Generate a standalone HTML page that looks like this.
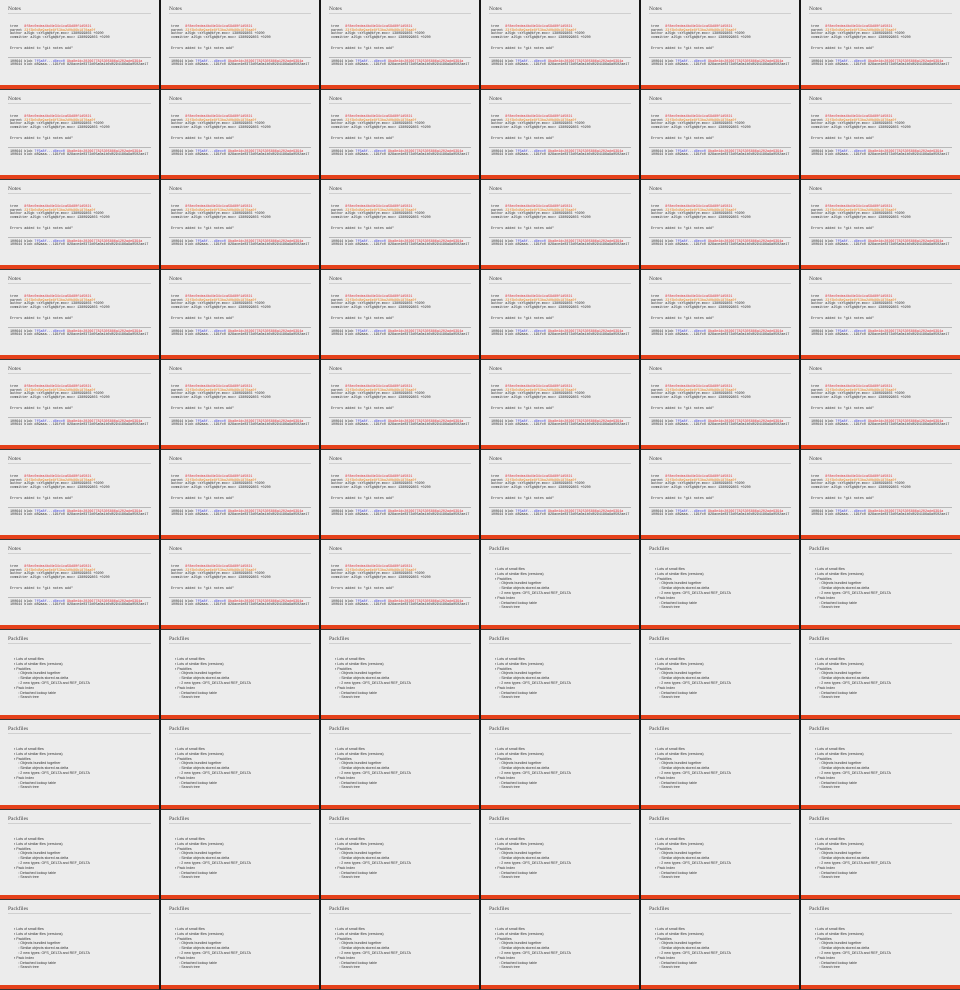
<!DOCTYPE html>
<html><head><meta charset="utf-8"><style>
*{margin:0;padding:0;box-sizing:border-box}
body{width:960px;height:990px;background:#1a1a1a;overflow:hidden;font-family:"Liberation Sans",sans-serif}
.g{display:grid;grid-template-columns:repeat(6,160px);grid-template-rows:repeat(11,90px)}
.c{position:relative;background:#ececec;border-left:1px solid #151515;border-right:1px solid #151515;border-bottom:1px solid #333;overflow:hidden}
.c:nth-child(6n+1){border-left:none}
.c:nth-child(6n){border-right:none}
.t{position:absolute;left:8px;top:6px;font-family:"Liberation Serif",serif;font-size:5.5px;color:#444}
.h{position:absolute;left:8px;right:8px;top:13px;height:1px;background:#cfcfcf}
.r{position:absolute;left:0;right:0;top:85px;height:4px;background:#e4411b}
.m{position:absolute;left:10px;top:26px;font-family:"Liberation Mono",monospace;font-size:3.4px;line-height:3.6px;color:#333;white-space:pre}
.m2{top:48px}
.m3{top:60.5px}
.red{color:#e0303a}.or{color:#e8821c}.bl{color:#4040e0}
.hr2{position:absolute;left:8px;right:8px;top:57px;height:1px;background:#b8b8b8}
.p{position:absolute;left:14px;top:27px;font-size:3.6px;line-height:4.8px;color:#333;white-space:pre}
</style></head><body><div class="g">
<!-- row 1 -->
<div class="c"><div class="t">Notes</div><div class="h"></div><div class="m">tree   <span class="red">8f8ec0edea4bd4e34c1ca59d80f1d5021</span>
parent <span class="or">23f3b0d8e9ae6e8f53ba2d0b86b1870aa0f</span>
author aJ5gb &lt;sY5gb@kfye.moc&gt; 1380999803 +0200
committer aJ5gb &lt;sY5gb@kfye.moc&gt; 1380999803 +0200</div><div class="m m2">Errors added to "git notes add"</div><div class="hr2"></div><div class="m m3">100644 blob <span class="bl">7f5a8f...d8ecc0</span> <span class="red">9ba8e4dc2026677825305886a1202ade9394a</span>
100644 blob d89aaa...191fc0 828ace4e0372d05a0a1b0d0294186a9a0502ae17</div><div class="r"></div></div>
<div class="c"><div class="t">Notes</div><div class="h"></div><div class="m">tree   <span class="red">8f8ec0edea4bd4e34c1ca59d80f1d5021</span>
parent <span class="or">23f3b0d8e9ae6e8f53ba2d0b86b1870aa0f</span>
author aJ5gb &lt;sY5gb@kfye.moc&gt; 1380999803 +0200
committer aJ5gb &lt;sY5gb@kfye.moc&gt; 1380999803 +0200</div><div class="m m2">Errors added to "git notes add"</div><div class="hr2"></div><div class="m m3">100644 blob <span class="bl">7f5a8f...d8ecc0</span> <span class="red">9ba8e4dc2026677825305886a1202ade9394a</span>
100644 blob d89aaa...191fc0 828ace4e0372d05a0a1b0d0294186a9a0502ae17</div><div class="r"></div></div>
<div class="c"><div class="t">Notes</div><div class="h"></div><div class="m">tree   <span class="red">8f8ec0edea4bd4e34c1ca59d80f1d5021</span>
parent <span class="or">23f3b0d8e9ae6e8f53ba2d0b86b1870aa0f</span>
author aJ5gb &lt;sY5gb@kfye.moc&gt; 1380999803 +0200
committer aJ5gb &lt;sY5gb@kfye.moc&gt; 1380999803 +0200</div><div class="m m2">Errors added to "git notes add"</div><div class="hr2"></div><div class="m m3">100644 blob <span class="bl">7f5a8f...d8ecc0</span> <span class="red">9ba8e4dc2026677825305886a1202ade9394a</span>
100644 blob d89aaa...191fc0 828ace4e0372d05a0a1b0d0294186a9a0502ae17</div><div class="r"></div></div>
<div class="c"><div class="t">Notes</div><div class="h"></div><div class="m">tree   <span class="red">8f8ec0edea4bd4e34c1ca59d80f1d5021</span>
parent <span class="or">23f3b0d8e9ae6e8f53ba2d0b86b1870aa0f</span>
author aJ5gb &lt;sY5gb@kfye.moc&gt; 1380999803 +0200
committer aJ5gb &lt;sY5gb@kfye.moc&gt; 1380999803 +0200</div><div class="m m2">Errors added to "git notes add"</div><div class="hr2"></div><div class="m m3">100644 blob <span class="bl">7f5a8f...d8ecc0</span> <span class="red">9ba8e4dc2026677825305886a1202ade9394a</span>
100644 blob d89aaa...191fc0 828ace4e0372d05a0a1b0d0294186a9a0502ae17</div><div class="r"></div></div>
<div class="c"><div class="t">Notes</div><div class="h"></div><div class="m">tree   <span class="red">8f8ec0edea4bd4e34c1ca59d80f1d5021</span>
parent <span class="or">23f3b0d8e9ae6e8f53ba2d0b86b1870aa0f</span>
author aJ5gb &lt;sY5gb@kfye.moc&gt; 1380999803 +0200
committer aJ5gb &lt;sY5gb@kfye.moc&gt; 1380999803 +0200</div><div class="m m2">Errors added to "git notes add"</div><div class="hr2"></div><div class="m m3">100644 blob <span class="bl">7f5a8f...d8ecc0</span> <span class="red">9ba8e4dc2026677825305886a1202ade9394a</span>
100644 blob d89aaa...191fc0 828ace4e0372d05a0a1b0d0294186a9a0502ae17</div><div class="r"></div></div>
<div class="c"><div class="t">Notes</div><div class="h"></div><div class="m">tree   <span class="red">8f8ec0edea4bd4e34c1ca59d80f1d5021</span>
parent <span class="or">23f3b0d8e9ae6e8f53ba2d0b86b1870aa0f</span>
author aJ5gb &lt;sY5gb@kfye.moc&gt; 1380999803 +0200
committer aJ5gb &lt;sY5gb@kfye.moc&gt; 1380999803 +0200</div><div class="m m2">Errors added to "git notes add"</div><div class="hr2"></div><div class="m m3">100644 blob <span class="bl">7f5a8f...d8ecc0</span> <span class="red">9ba8e4dc2026677825305886a1202ade9394a</span>
100644 blob d89aaa...191fc0 828ace4e0372d05a0a1b0d0294186a9a0502ae17</div><div class="r"></div></div>
<!-- row 2 -->
<div class="c"><div class="t">Notes</div><div class="h"></div><div class="m">tree   <span class="red">8f8ec0edea4bd4e34c1ca59d80f1d5021</span>
parent <span class="or">23f3b0d8e9ae6e8f53ba2d0b86b1870aa0f</span>
author aJ5gb &lt;sY5gb@kfye.moc&gt; 1380999803 +0200
committer aJ5gb &lt;sY5gb@kfye.moc&gt; 1380999803 +0200</div><div class="m m2">Errors added to "git notes add"</div><div class="hr2"></div><div class="m m3">100644 blob <span class="bl">7f5a8f...d8ecc0</span> <span class="red">9ba8e4dc2026677825305886a1202ade9394a</span>
100644 blob d89aaa...191fc0 828ace4e0372d05a0a1b0d0294186a9a0502ae17</div><div class="r"></div></div>
<div class="c"><div class="t">Notes</div><div class="h"></div><div class="m">tree   <span class="red">8f8ec0edea4bd4e34c1ca59d80f1d5021</span>
parent <span class="or">23f3b0d8e9ae6e8f53ba2d0b86b1870aa0f</span>
author aJ5gb &lt;sY5gb@kfye.moc&gt; 1380999803 +0200
committer aJ5gb &lt;sY5gb@kfye.moc&gt; 1380999803 +0200</div><div class="m m2">Errors added to "git notes add"</div><div class="hr2"></div><div class="m m3">100644 blob <span class="bl">7f5a8f...d8ecc0</span> <span class="red">9ba8e4dc2026677825305886a1202ade9394a</span>
100644 blob d89aaa...191fc0 828ace4e0372d05a0a1b0d0294186a9a0502ae17</div><div class="r"></div></div>
<div class="c"><div class="t">Notes</div><div class="h"></div><div class="m">tree   <span class="red">8f8ec0edea4bd4e34c1ca59d80f1d5021</span>
parent <span class="or">23f3b0d8e9ae6e8f53ba2d0b86b1870aa0f</span>
author aJ5gb &lt;sY5gb@kfye.moc&gt; 1380999803 +0200
committer aJ5gb &lt;sY5gb@kfye.moc&gt; 1380999803 +0200</div><div class="m m2">Errors added to "git notes add"</div><div class="hr2"></div><div class="m m3">100644 blob <span class="bl">7f5a8f...d8ecc0</span> <span class="red">9ba8e4dc2026677825305886a1202ade9394a</span>
100644 blob d89aaa...191fc0 828ace4e0372d05a0a1b0d0294186a9a0502ae17</div><div class="r"></div></div>
<div class="c"><div class="t">Notes</div><div class="h"></div><div class="m">tree   <span class="red">8f8ec0edea4bd4e34c1ca59d80f1d5021</span>
parent <span class="or">23f3b0d8e9ae6e8f53ba2d0b86b1870aa0f</span>
author aJ5gb &lt;sY5gb@kfye.moc&gt; 1380999803 +0200
committer aJ5gb &lt;sY5gb@kfye.moc&gt; 1380999803 +0200</div><div class="m m2">Errors added to "git notes add"</div><div class="hr2"></div><div class="m m3">100644 blob <span class="bl">7f5a8f...d8ecc0</span> <span class="red">9ba8e4dc2026677825305886a1202ade9394a</span>
100644 blob d89aaa...191fc0 828ace4e0372d05a0a1b0d0294186a9a0502ae17</div><div class="r"></div></div>
<div class="c"><div class="t">Notes</div><div class="h"></div><div class="m">tree   <span class="red">8f8ec0edea4bd4e34c1ca59d80f1d5021</span>
parent <span class="or">23f3b0d8e9ae6e8f53ba2d0b86b1870aa0f</span>
author aJ5gb &lt;sY5gb@kfye.moc&gt; 1380999803 +0200
committer aJ5gb &lt;sY5gb@kfye.moc&gt; 1380999803 +0200</div><div class="m m2">Errors added to "git notes add"</div><div class="hr2"></div><div class="m m3">100644 blob <span class="bl">7f5a8f...d8ecc0</span> <span class="red">9ba8e4dc2026677825305886a1202ade9394a</span>
100644 blob d89aaa...191fc0 828ace4e0372d05a0a1b0d0294186a9a0502ae17</div><div class="r"></div></div>
<div class="c"><div class="t">Notes</div><div class="h"></div><div class="m">tree   <span class="red">8f8ec0edea4bd4e34c1ca59d80f1d5021</span>
parent <span class="or">23f3b0d8e9ae6e8f53ba2d0b86b1870aa0f</span>
author aJ5gb &lt;sY5gb@kfye.moc&gt; 1380999803 +0200
committer aJ5gb &lt;sY5gb@kfye.moc&gt; 1380999803 +0200</div><div class="m m2">Errors added to "git notes add"</div><div class="hr2"></div><div class="m m3">100644 blob <span class="bl">7f5a8f...d8ecc0</span> <span class="red">9ba8e4dc2026677825305886a1202ade9394a</span>
100644 blob d89aaa...191fc0 828ace4e0372d05a0a1b0d0294186a9a0502ae17</div><div class="r"></div></div>
<!-- row 3 -->
<div class="c"><div class="t">Notes</div><div class="h"></div><div class="m">tree   <span class="red">8f8ec0edea4bd4e34c1ca59d80f1d5021</span>
parent <span class="or">23f3b0d8e9ae6e8f53ba2d0b86b1870aa0f</span>
author aJ5gb &lt;sY5gb@kfye.moc&gt; 1380999803 +0200
committer aJ5gb &lt;sY5gb@kfye.moc&gt; 1380999803 +0200</div><div class="m m2">Errors added to "git notes add"</div><div class="hr2"></div><div class="m m3">100644 blob <span class="bl">7f5a8f...d8ecc0</span> <span class="red">9ba8e4dc2026677825305886a1202ade9394a</span>
100644 blob d89aaa...191fc0 828ace4e0372d05a0a1b0d0294186a9a0502ae17</div><div class="r"></div></div>
<div class="c"><div class="t">Notes</div><div class="h"></div><div class="m">tree   <span class="red">8f8ec0edea4bd4e34c1ca59d80f1d5021</span>
parent <span class="or">23f3b0d8e9ae6e8f53ba2d0b86b1870aa0f</span>
author aJ5gb &lt;sY5gb@kfye.moc&gt; 1380999803 +0200
committer aJ5gb &lt;sY5gb@kfye.moc&gt; 1380999803 +0200</div><div class="m m2">Errors added to "git notes add"</div><div class="hr2"></div><div class="m m3">100644 blob <span class="bl">7f5a8f...d8ecc0</span> <span class="red">9ba8e4dc2026677825305886a1202ade9394a</span>
100644 blob d89aaa...191fc0 828ace4e0372d05a0a1b0d0294186a9a0502ae17</div><div class="r"></div></div>
<div class="c"><div class="t">Notes</div><div class="h"></div><div class="m">tree   <span class="red">8f8ec0edea4bd4e34c1ca59d80f1d5021</span>
parent <span class="or">23f3b0d8e9ae6e8f53ba2d0b86b1870aa0f</span>
author aJ5gb &lt;sY5gb@kfye.moc&gt; 1380999803 +0200
committer aJ5gb &lt;sY5gb@kfye.moc&gt; 1380999803 +0200</div><div class="m m2">Errors added to "git notes add"</div><div class="hr2"></div><div class="m m3">100644 blob <span class="bl">7f5a8f...d8ecc0</span> <span class="red">9ba8e4dc2026677825305886a1202ade9394a</span>
100644 blob d89aaa...191fc0 828ace4e0372d05a0a1b0d0294186a9a0502ae17</div><div class="r"></div></div>
<div class="c"><div class="t">Notes</div><div class="h"></div><div class="m">tree   <span class="red">8f8ec0edea4bd4e34c1ca59d80f1d5021</span>
parent <span class="or">23f3b0d8e9ae6e8f53ba2d0b86b1870aa0f</span>
author aJ5gb &lt;sY5gb@kfye.moc&gt; 1380999803 +0200
committer aJ5gb &lt;sY5gb@kfye.moc&gt; 1380999803 +0200</div><div class="m m2">Errors added to "git notes add"</div><div class="hr2"></div><div class="m m3">100644 blob <span class="bl">7f5a8f...d8ecc0</span> <span class="red">9ba8e4dc2026677825305886a1202ade9394a</span>
100644 blob d89aaa...191fc0 828ace4e0372d05a0a1b0d0294186a9a0502ae17</div><div class="r"></div></div>
<div class="c"><div class="t">Notes</div><div class="h"></div><div class="m">tree   <span class="red">8f8ec0edea4bd4e34c1ca59d80f1d5021</span>
parent <span class="or">23f3b0d8e9ae6e8f53ba2d0b86b1870aa0f</span>
author aJ5gb &lt;sY5gb@kfye.moc&gt; 1380999803 +0200
committer aJ5gb &lt;sY5gb@kfye.moc&gt; 1380999803 +0200</div><div class="m m2">Errors added to "git notes add"</div><div class="hr2"></div><div class="m m3">100644 blob <span class="bl">7f5a8f...d8ecc0</span> <span class="red">9ba8e4dc2026677825305886a1202ade9394a</span>
100644 blob d89aaa...191fc0 828ace4e0372d05a0a1b0d0294186a9a0502ae17</div><div class="r"></div></div>
<div class="c"><div class="t">Notes</div><div class="h"></div><div class="m">tree   <span class="red">8f8ec0edea4bd4e34c1ca59d80f1d5021</span>
parent <span class="or">23f3b0d8e9ae6e8f53ba2d0b86b1870aa0f</span>
author aJ5gb &lt;sY5gb@kfye.moc&gt; 1380999803 +0200
committer aJ5gb &lt;sY5gb@kfye.moc&gt; 1380999803 +0200</div><div class="m m2">Errors added to "git notes add"</div><div class="hr2"></div><div class="m m3">100644 blob <span class="bl">7f5a8f...d8ecc0</span> <span class="red">9ba8e4dc2026677825305886a1202ade9394a</span>
100644 blob d89aaa...191fc0 828ace4e0372d05a0a1b0d0294186a9a0502ae17</div><div class="r"></div></div>
<!-- row 4 -->
<div class="c"><div class="t">Notes</div><div class="h"></div><div class="m">tree   <span class="red">8f8ec0edea4bd4e34c1ca59d80f1d5021</span>
parent <span class="or">23f3b0d8e9ae6e8f53ba2d0b86b1870aa0f</span>
author aJ5gb &lt;sY5gb@kfye.moc&gt; 1380999803 +0200
committer aJ5gb &lt;sY5gb@kfye.moc&gt; 1380999803 +0200</div><div class="m m2">Errors added to "git notes add"</div><div class="hr2"></div><div class="m m3">100644 blob <span class="bl">7f5a8f...d8ecc0</span> <span class="red">9ba8e4dc2026677825305886a1202ade9394a</span>
100644 blob d89aaa...191fc0 828ace4e0372d05a0a1b0d0294186a9a0502ae17</div><div class="r"></div></div>
<div class="c"><div class="t">Notes</div><div class="h"></div><div class="m">tree   <span class="red">8f8ec0edea4bd4e34c1ca59d80f1d5021</span>
parent <span class="or">23f3b0d8e9ae6e8f53ba2d0b86b1870aa0f</span>
author aJ5gb &lt;sY5gb@kfye.moc&gt; 1380999803 +0200
committer aJ5gb &lt;sY5gb@kfye.moc&gt; 1380999803 +0200</div><div class="m m2">Errors added to "git notes add"</div><div class="hr2"></div><div class="m m3">100644 blob <span class="bl">7f5a8f...d8ecc0</span> <span class="red">9ba8e4dc2026677825305886a1202ade9394a</span>
100644 blob d89aaa...191fc0 828ace4e0372d05a0a1b0d0294186a9a0502ae17</div><div class="r"></div></div>
<div class="c"><div class="t">Notes</div><div class="h"></div><div class="m">tree   <span class="red">8f8ec0edea4bd4e34c1ca59d80f1d5021</span>
parent <span class="or">23f3b0d8e9ae6e8f53ba2d0b86b1870aa0f</span>
author aJ5gb &lt;sY5gb@kfye.moc&gt; 1380999803 +0200
committer aJ5gb &lt;sY5gb@kfye.moc&gt; 1380999803 +0200</div><div class="m m2">Errors added to "git notes add"</div><div class="hr2"></div><div class="m m3">100644 blob <span class="bl">7f5a8f...d8ecc0</span> <span class="red">9ba8e4dc2026677825305886a1202ade9394a</span>
100644 blob d89aaa...191fc0 828ace4e0372d05a0a1b0d0294186a9a0502ae17</div><div class="r"></div></div>
<div class="c"><div class="t">Notes</div><div class="h"></div><div class="m">tree   <span class="red">8f8ec0edea4bd4e34c1ca59d80f1d5021</span>
parent <span class="or">23f3b0d8e9ae6e8f53ba2d0b86b1870aa0f</span>
author aJ5gb &lt;sY5gb@kfye.moc&gt; 1380999803 +0200
committer aJ5gb &lt;sY5gb@kfye.moc&gt; 1380999803 +0200</div><div class="m m2">Errors added to "git notes add"</div><div class="hr2"></div><div class="m m3">100644 blob <span class="bl">7f5a8f...d8ecc0</span> <span class="red">9ba8e4dc2026677825305886a1202ade9394a</span>
100644 blob d89aaa...191fc0 828ace4e0372d05a0a1b0d0294186a9a0502ae17</div><div class="r"></div></div>
<div class="c"><div class="t">Notes</div><div class="h"></div><div class="m">tree   <span class="red">8f8ec0edea4bd4e34c1ca59d80f1d5021</span>
parent <span class="or">23f3b0d8e9ae6e8f53ba2d0b86b1870aa0f</span>
author aJ5gb &lt;sY5gb@kfye.moc&gt; 1380999803 +0200
committer aJ5gb &lt;sY5gb@kfye.moc&gt; 1380999803 +0200</div><div class="m m2">Errors added to "git notes add"</div><div class="hr2"></div><div class="m m3">100644 blob <span class="bl">7f5a8f...d8ecc0</span> <span class="red">9ba8e4dc2026677825305886a1202ade9394a</span>
100644 blob d89aaa...191fc0 828ace4e0372d05a0a1b0d0294186a9a0502ae17</div><div class="r"></div></div>
<div class="c"><div class="t">Notes</div><div class="h"></div><div class="m">tree   <span class="red">8f8ec0edea4bd4e34c1ca59d80f1d5021</span>
parent <span class="or">23f3b0d8e9ae6e8f53ba2d0b86b1870aa0f</span>
author aJ5gb &lt;sY5gb@kfye.moc&gt; 1380999803 +0200
committer aJ5gb &lt;sY5gb@kfye.moc&gt; 1380999803 +0200</div><div class="m m2">Errors added to "git notes add"</div><div class="hr2"></div><div class="m m3">100644 blob <span class="bl">7f5a8f...d8ecc0</span> <span class="red">9ba8e4dc2026677825305886a1202ade9394a</span>
100644 blob d89aaa...191fc0 828ace4e0372d05a0a1b0d0294186a9a0502ae17</div><div class="r"></div></div>
<!-- row 5 -->
<div class="c"><div class="t">Notes</div><div class="h"></div><div class="m">tree   <span class="red">8f8ec0edea4bd4e34c1ca59d80f1d5021</span>
parent <span class="or">23f3b0d8e9ae6e8f53ba2d0b86b1870aa0f</span>
author aJ5gb &lt;sY5gb@kfye.moc&gt; 1380999803 +0200
committer aJ5gb &lt;sY5gb@kfye.moc&gt; 1380999803 +0200</div><div class="m m2">Errors added to "git notes add"</div><div class="hr2"></div><div class="m m3">100644 blob <span class="bl">7f5a8f...d8ecc0</span> <span class="red">9ba8e4dc2026677825305886a1202ade9394a</span>
100644 blob d89aaa...191fc0 828ace4e0372d05a0a1b0d0294186a9a0502ae17</div><div class="r"></div></div>
<div class="c"><div class="t">Notes</div><div class="h"></div><div class="m">tree   <span class="red">8f8ec0edea4bd4e34c1ca59d80f1d5021</span>
parent <span class="or">23f3b0d8e9ae6e8f53ba2d0b86b1870aa0f</span>
author aJ5gb &lt;sY5gb@kfye.moc&gt; 1380999803 +0200
committer aJ5gb &lt;sY5gb@kfye.moc&gt; 1380999803 +0200</div><div class="m m2">Errors added to "git notes add"</div><div class="hr2"></div><div class="m m3">100644 blob <span class="bl">7f5a8f...d8ecc0</span> <span class="red">9ba8e4dc2026677825305886a1202ade9394a</span>
100644 blob d89aaa...191fc0 828ace4e0372d05a0a1b0d0294186a9a0502ae17</div><div class="r"></div></div>
<div class="c"><div class="t">Notes</div><div class="h"></div><div class="m">tree   <span class="red">8f8ec0edea4bd4e34c1ca59d80f1d5021</span>
parent <span class="or">23f3b0d8e9ae6e8f53ba2d0b86b1870aa0f</span>
author aJ5gb &lt;sY5gb@kfye.moc&gt; 1380999803 +0200
committer aJ5gb &lt;sY5gb@kfye.moc&gt; 1380999803 +0200</div><div class="m m2">Errors added to "git notes add"</div><div class="hr2"></div><div class="m m3">100644 blob <span class="bl">7f5a8f...d8ecc0</span> <span class="red">9ba8e4dc2026677825305886a1202ade9394a</span>
100644 blob d89aaa...191fc0 828ace4e0372d05a0a1b0d0294186a9a0502ae17</div><div class="r"></div></div>
<div class="c"><div class="t">Notes</div><div class="h"></div><div class="m">tree   <span class="red">8f8ec0edea4bd4e34c1ca59d80f1d5021</span>
parent <span class="or">23f3b0d8e9ae6e8f53ba2d0b86b1870aa0f</span>
author aJ5gb &lt;sY5gb@kfye.moc&gt; 1380999803 +0200
committer aJ5gb &lt;sY5gb@kfye.moc&gt; 1380999803 +0200</div><div class="m m2">Errors added to "git notes add"</div><div class="hr2"></div><div class="m m3">100644 blob <span class="bl">7f5a8f...d8ecc0</span> <span class="red">9ba8e4dc2026677825305886a1202ade9394a</span>
100644 blob d89aaa...191fc0 828ace4e0372d05a0a1b0d0294186a9a0502ae17</div><div class="r"></div></div>
<div class="c"><div class="t">Notes</div><div class="h"></div><div class="m">tree   <span class="red">8f8ec0edea4bd4e34c1ca59d80f1d5021</span>
parent <span class="or">23f3b0d8e9ae6e8f53ba2d0b86b1870aa0f</span>
author aJ5gb &lt;sY5gb@kfye.moc&gt; 1380999803 +0200
committer aJ5gb &lt;sY5gb@kfye.moc&gt; 1380999803 +0200</div><div class="m m2">Errors added to "git notes add"</div><div class="hr2"></div><div class="m m3">100644 blob <span class="bl">7f5a8f...d8ecc0</span> <span class="red">9ba8e4dc2026677825305886a1202ade9394a</span>
100644 blob d89aaa...191fc0 828ace4e0372d05a0a1b0d0294186a9a0502ae17</div><div class="r"></div></div>
<div class="c"><div class="t">Notes</div><div class="h"></div><div class="m">tree   <span class="red">8f8ec0edea4bd4e34c1ca59d80f1d5021</span>
parent <span class="or">23f3b0d8e9ae6e8f53ba2d0b86b1870aa0f</span>
author aJ5gb &lt;sY5gb@kfye.moc&gt; 1380999803 +0200
committer aJ5gb &lt;sY5gb@kfye.moc&gt; 1380999803 +0200</div><div class="m m2">Errors added to "git notes add"</div><div class="hr2"></div><div class="m m3">100644 blob <span class="bl">7f5a8f...d8ecc0</span> <span class="red">9ba8e4dc2026677825305886a1202ade9394a</span>
100644 blob d89aaa...191fc0 828ace4e0372d05a0a1b0d0294186a9a0502ae17</div><div class="r"></div></div>
<!-- row 6 -->
<div class="c"><div class="t">Notes</div><div class="h"></div><div class="m">tree   <span class="red">8f8ec0edea4bd4e34c1ca59d80f1d5021</span>
parent <span class="or">23f3b0d8e9ae6e8f53ba2d0b86b1870aa0f</span>
author aJ5gb &lt;sY5gb@kfye.moc&gt; 1380999803 +0200
committer aJ5gb &lt;sY5gb@kfye.moc&gt; 1380999803 +0200</div><div class="m m2">Errors added to "git notes add"</div><div class="hr2"></div><div class="m m3">100644 blob <span class="bl">7f5a8f...d8ecc0</span> <span class="red">9ba8e4dc2026677825305886a1202ade9394a</span>
100644 blob d89aaa...191fc0 828ace4e0372d05a0a1b0d0294186a9a0502ae17</div><div class="r"></div></div>
<div class="c"><div class="t">Notes</div><div class="h"></div><div class="m">tree   <span class="red">8f8ec0edea4bd4e34c1ca59d80f1d5021</span>
parent <span class="or">23f3b0d8e9ae6e8f53ba2d0b86b1870aa0f</span>
author aJ5gb &lt;sY5gb@kfye.moc&gt; 1380999803 +0200
committer aJ5gb &lt;sY5gb@kfye.moc&gt; 1380999803 +0200</div><div class="m m2">Errors added to "git notes add"</div><div class="hr2"></div><div class="m m3">100644 blob <span class="bl">7f5a8f...d8ecc0</span> <span class="red">9ba8e4dc2026677825305886a1202ade9394a</span>
100644 blob d89aaa...191fc0 828ace4e0372d05a0a1b0d0294186a9a0502ae17</div><div class="r"></div></div>
<div class="c"><div class="t">Notes</div><div class="h"></div><div class="m">tree   <span class="red">8f8ec0edea4bd4e34c1ca59d80f1d5021</span>
parent <span class="or">23f3b0d8e9ae6e8f53ba2d0b86b1870aa0f</span>
author aJ5gb &lt;sY5gb@kfye.moc&gt; 1380999803 +0200
committer aJ5gb &lt;sY5gb@kfye.moc&gt; 1380999803 +0200</div><div class="m m2">Errors added to "git notes add"</div><div class="hr2"></div><div class="m m3">100644 blob <span class="bl">7f5a8f...d8ecc0</span> <span class="red">9ba8e4dc2026677825305886a1202ade9394a</span>
100644 blob d89aaa...191fc0 828ace4e0372d05a0a1b0d0294186a9a0502ae17</div><div class="r"></div></div>
<div class="c"><div class="t">Notes</div><div class="h"></div><div class="m">tree   <span class="red">8f8ec0edea4bd4e34c1ca59d80f1d5021</span>
parent <span class="or">23f3b0d8e9ae6e8f53ba2d0b86b1870aa0f</span>
author aJ5gb &lt;sY5gb@kfye.moc&gt; 1380999803 +0200
committer aJ5gb &lt;sY5gb@kfye.moc&gt; 1380999803 +0200</div><div class="m m2">Errors added to "git notes add"</div><div class="hr2"></div><div class="m m3">100644 blob <span class="bl">7f5a8f...d8ecc0</span> <span class="red">9ba8e4dc2026677825305886a1202ade9394a</span>
100644 blob d89aaa...191fc0 828ace4e0372d05a0a1b0d0294186a9a0502ae17</div><div class="r"></div></div>
<div class="c"><div class="t">Notes</div><div class="h"></div><div class="m">tree   <span class="red">8f8ec0edea4bd4e34c1ca59d80f1d5021</span>
parent <span class="or">23f3b0d8e9ae6e8f53ba2d0b86b1870aa0f</span>
author aJ5gb &lt;sY5gb@kfye.moc&gt; 1380999803 +0200
committer aJ5gb &lt;sY5gb@kfye.moc&gt; 1380999803 +0200</div><div class="m m2">Errors added to "git notes add"</div><div class="hr2"></div><div class="m m3">100644 blob <span class="bl">7f5a8f...d8ecc0</span> <span class="red">9ba8e4dc2026677825305886a1202ade9394a</span>
100644 blob d89aaa...191fc0 828ace4e0372d05a0a1b0d0294186a9a0502ae17</div><div class="r"></div></div>
<div class="c"><div class="t">Notes</div><div class="h"></div><div class="m">tree   <span class="red">8f8ec0edea4bd4e34c1ca59d80f1d5021</span>
parent <span class="or">23f3b0d8e9ae6e8f53ba2d0b86b1870aa0f</span>
author aJ5gb &lt;sY5gb@kfye.moc&gt; 1380999803 +0200
committer aJ5gb &lt;sY5gb@kfye.moc&gt; 1380999803 +0200</div><div class="m m2">Errors added to "git notes add"</div><div class="hr2"></div><div class="m m3">100644 blob <span class="bl">7f5a8f...d8ecc0</span> <span class="red">9ba8e4dc2026677825305886a1202ade9394a</span>
100644 blob d89aaa...191fc0 828ace4e0372d05a0a1b0d0294186a9a0502ae17</div><div class="r"></div></div>
<!-- row 7: 3 notes + 3 packfiles -->
<div class="c"><div class="t">Notes</div><div class="h"></div><div class="m">tree   <span class="red">8f8ec0edea4bd4e34c1ca59d80f1d5021</span>
parent <span class="or">23f3b0d8e9ae6e8f53ba2d0b86b1870aa0f</span>
author aJ5gb &lt;sY5gb@kfye.moc&gt; 1380999803 +0200
committer aJ5gb &lt;sY5gb@kfye.moc&gt; 1380999803 +0200</div><div class="m m2">Errors added to "git notes add"</div><div class="hr2"></div><div class="m m3">100644 blob <span class="bl">7f5a8f...d8ecc0</span> <span class="red">9ba8e4dc2026677825305886a1202ade9394a</span>
100644 blob d89aaa...191fc0 828ace4e0372d05a0a1b0d0294186a9a0502ae17</div><div class="r"></div></div>
<div class="c"><div class="t">Notes</div><div class="h"></div><div class="m">tree   <span class="red">8f8ec0edea4bd4e34c1ca59d80f1d5021</span>
parent <span class="or">23f3b0d8e9ae6e8f53ba2d0b86b1870aa0f</span>
author aJ5gb &lt;sY5gb@kfye.moc&gt; 1380999803 +0200
committer aJ5gb &lt;sY5gb@kfye.moc&gt; 1380999803 +0200</div><div class="m m2">Errors added to "git notes add"</div><div class="hr2"></div><div class="m m3">100644 blob <span class="bl">7f5a8f...d8ecc0</span> <span class="red">9ba8e4dc2026677825305886a1202ade9394a</span>
100644 blob d89aaa...191fc0 828ace4e0372d05a0a1b0d0294186a9a0502ae17</div><div class="r"></div></div>
<div class="c"><div class="t">Notes</div><div class="h"></div><div class="m">tree   <span class="red">8f8ec0edea4bd4e34c1ca59d80f1d5021</span>
parent <span class="or">23f3b0d8e9ae6e8f53ba2d0b86b1870aa0f</span>
author aJ5gb &lt;sY5gb@kfye.moc&gt; 1380999803 +0200
committer aJ5gb &lt;sY5gb@kfye.moc&gt; 1380999803 +0200</div><div class="m m2">Errors added to "git notes add"</div><div class="hr2"></div><div class="m m3">100644 blob <span class="bl">7f5a8f...d8ecc0</span> <span class="red">9ba8e4dc2026677825305886a1202ade9394a</span>
100644 blob d89aaa...191fc0 828ace4e0372d05a0a1b0d0294186a9a0502ae17</div><div class="r"></div></div>
<div class="c"><div class="t">Packfiles</div><div class="h"></div><div class="p">▪ Lots of small files
▪ Lots of similar files (versions)
▪ Packfiles
    ▫ Objects bundled together
    ▫ Similar objects stored as delta
    ▫ 2 new types: OFS_DELTA and REF_DELTA
▪ Pack Index
    ▫ Detached lookup table
    ▫ Search tree</div><div class="r"></div></div>
<div class="c"><div class="t">Packfiles</div><div class="h"></div><div class="p">▪ Lots of small files
▪ Lots of similar files (versions)
▪ Packfiles
    ▫ Objects bundled together
    ▫ Similar objects stored as delta
    ▫ 2 new types: OFS_DELTA and REF_DELTA
▪ Pack Index
    ▫ Detached lookup table
    ▫ Search tree</div><div class="r"></div></div>
<div class="c"><div class="t">Packfiles</div><div class="h"></div><div class="p">▪ Lots of small files
▪ Lots of similar files (versions)
▪ Packfiles
    ▫ Objects bundled together
    ▫ Similar objects stored as delta
    ▫ 2 new types: OFS_DELTA and REF_DELTA
▪ Pack Index
    ▫ Detached lookup table
    ▫ Search tree</div><div class="r"></div></div>
<!-- row 8 -->
<div class="c"><div class="t">Packfiles</div><div class="h"></div><div class="p">▪ Lots of small files
▪ Lots of similar files (versions)
▪ Packfiles
    ▫ Objects bundled together
    ▫ Similar objects stored as delta
    ▫ 2 new types: OFS_DELTA and REF_DELTA
▪ Pack Index
    ▫ Detached lookup table
    ▫ Search tree</div><div class="r"></div></div>
<div class="c"><div class="t">Packfiles</div><div class="h"></div><div class="p">▪ Lots of small files
▪ Lots of similar files (versions)
▪ Packfiles
    ▫ Objects bundled together
    ▫ Similar objects stored as delta
    ▫ 2 new types: OFS_DELTA and REF_DELTA
▪ Pack Index
    ▫ Detached lookup table
    ▫ Search tree</div><div class="r"></div></div>
<div class="c"><div class="t">Packfiles</div><div class="h"></div><div class="p">▪ Lots of small files
▪ Lots of similar files (versions)
▪ Packfiles
    ▫ Objects bundled together
    ▫ Similar objects stored as delta
    ▫ 2 new types: OFS_DELTA and REF_DELTA
▪ Pack Index
    ▫ Detached lookup table
    ▫ Search tree</div><div class="r"></div></div>
<div class="c"><div class="t">Packfiles</div><div class="h"></div><div class="p">▪ Lots of small files
▪ Lots of similar files (versions)
▪ Packfiles
    ▫ Objects bundled together
    ▫ Similar objects stored as delta
    ▫ 2 new types: OFS_DELTA and REF_DELTA
▪ Pack Index
    ▫ Detached lookup table
    ▫ Search tree</div><div class="r"></div></div>
<div class="c"><div class="t">Packfiles</div><div class="h"></div><div class="p">▪ Lots of small files
▪ Lots of similar files (versions)
▪ Packfiles
    ▫ Objects bundled together
    ▫ Similar objects stored as delta
    ▫ 2 new types: OFS_DELTA and REF_DELTA
▪ Pack Index
    ▫ Detached lookup table
    ▫ Search tree</div><div class="r"></div></div>
<div class="c"><div class="t">Packfiles</div><div class="h"></div><div class="p">▪ Lots of small files
▪ Lots of similar files (versions)
▪ Packfiles
    ▫ Objects bundled together
    ▫ Similar objects stored as delta
    ▫ 2 new types: OFS_DELTA and REF_DELTA
▪ Pack Index
    ▫ Detached lookup table
    ▫ Search tree</div><div class="r"></div></div>
<!-- row 9 -->
<div class="c"><div class="t">Packfiles</div><div class="h"></div><div class="p">▪ Lots of small files
▪ Lots of similar files (versions)
▪ Packfiles
    ▫ Objects bundled together
    ▫ Similar objects stored as delta
    ▫ 2 new types: OFS_DELTA and REF_DELTA
▪ Pack Index
    ▫ Detached lookup table
    ▫ Search tree</div><div class="r"></div></div>
<div class="c"><div class="t">Packfiles</div><div class="h"></div><div class="p">▪ Lots of small files
▪ Lots of similar files (versions)
▪ Packfiles
    ▫ Objects bundled together
    ▫ Similar objects stored as delta
    ▫ 2 new types: OFS_DELTA and REF_DELTA
▪ Pack Index
    ▫ Detached lookup table
    ▫ Search tree</div><div class="r"></div></div>
<div class="c"><div class="t">Packfiles</div><div class="h"></div><div class="p">▪ Lots of small files
▪ Lots of similar files (versions)
▪ Packfiles
    ▫ Objects bundled together
    ▫ Similar objects stored as delta
    ▫ 2 new types: OFS_DELTA and REF_DELTA
▪ Pack Index
    ▫ Detached lookup table
    ▫ Search tree</div><div class="r"></div></div>
<div class="c"><div class="t">Packfiles</div><div class="h"></div><div class="p">▪ Lots of small files
▪ Lots of similar files (versions)
▪ Packfiles
    ▫ Objects bundled together
    ▫ Similar objects stored as delta
    ▫ 2 new types: OFS_DELTA and REF_DELTA
▪ Pack Index
    ▫ Detached lookup table
    ▫ Search tree</div><div class="r"></div></div>
<div class="c"><div class="t">Packfiles</div><div class="h"></div><div class="p">▪ Lots of small files
▪ Lots of similar files (versions)
▪ Packfiles
    ▫ Objects bundled together
    ▫ Similar objects stored as delta
    ▫ 2 new types: OFS_DELTA and REF_DELTA
▪ Pack Index
    ▫ Detached lookup table
    ▫ Search tree</div><div class="r"></div></div>
<div class="c"><div class="t">Packfiles</div><div class="h"></div><div class="p">▪ Lots of small files
▪ Lots of similar files (versions)
▪ Packfiles
    ▫ Objects bundled together
    ▫ Similar objects stored as delta
    ▫ 2 new types: OFS_DELTA and REF_DELTA
▪ Pack Index
    ▫ Detached lookup table
    ▫ Search tree</div><div class="r"></div></div>
<!-- row 10 -->
<div class="c"><div class="t">Packfiles</div><div class="h"></div><div class="p">▪ Lots of small files
▪ Lots of similar files (versions)
▪ Packfiles
    ▫ Objects bundled together
    ▫ Similar objects stored as delta
    ▫ 2 new types: OFS_DELTA and REF_DELTA
▪ Pack Index
    ▫ Detached lookup table
    ▫ Search tree</div><div class="r"></div></div>
<div class="c"><div class="t">Packfiles</div><div class="h"></div><div class="p">▪ Lots of small files
▪ Lots of similar files (versions)
▪ Packfiles
    ▫ Objects bundled together
    ▫ Similar objects stored as delta
    ▫ 2 new types: OFS_DELTA and REF_DELTA
▪ Pack Index
    ▫ Detached lookup table
    ▫ Search tree</div><div class="r"></div></div>
<div class="c"><div class="t">Packfiles</div><div class="h"></div><div class="p">▪ Lots of small files
▪ Lots of similar files (versions)
▪ Packfiles
    ▫ Objects bundled together
    ▫ Similar objects stored as delta
    ▫ 2 new types: OFS_DELTA and REF_DELTA
▪ Pack Index
    ▫ Detached lookup table
    ▫ Search tree</div><div class="r"></div></div>
<div class="c"><div class="t">Packfiles</div><div class="h"></div><div class="p">▪ Lots of small files
▪ Lots of similar files (versions)
▪ Packfiles
    ▫ Objects bundled together
    ▫ Similar objects stored as delta
    ▫ 2 new types: OFS_DELTA and REF_DELTA
▪ Pack Index
    ▫ Detached lookup table
    ▫ Search tree</div><div class="r"></div></div>
<div class="c"><div class="t">Packfiles</div><div class="h"></div><div class="p">▪ Lots of small files
▪ Lots of similar files (versions)
▪ Packfiles
    ▫ Objects bundled together
    ▫ Similar objects stored as delta
    ▫ 2 new types: OFS_DELTA and REF_DELTA
▪ Pack Index
    ▫ Detached lookup table
    ▫ Search tree</div><div class="r"></div></div>
<div class="c"><div class="t">Packfiles</div><div class="h"></div><div class="p">▪ Lots of small files
▪ Lots of similar files (versions)
▪ Packfiles
    ▫ Objects bundled together
    ▫ Similar objects stored as delta
    ▫ 2 new types: OFS_DELTA and REF_DELTA
▪ Pack Index
    ▫ Detached lookup table
    ▫ Search tree</div><div class="r"></div></div>
<!-- row 11 -->
<div class="c"><div class="t">Packfiles</div><div class="h"></div><div class="p">▪ Lots of small files
▪ Lots of similar files (versions)
▪ Packfiles
    ▫ Objects bundled together
    ▫ Similar objects stored as delta
    ▫ 2 new types: OFS_DELTA and REF_DELTA
▪ Pack Index
    ▫ Detached lookup table
    ▫ Search tree</div><div class="r"></div></div>
<div class="c"><div class="t">Packfiles</div><div class="h"></div><div class="p">▪ Lots of small files
▪ Lots of similar files (versions)
▪ Packfiles
    ▫ Objects bundled together
    ▫ Similar objects stored as delta
    ▫ 2 new types: OFS_DELTA and REF_DELTA
▪ Pack Index
    ▫ Detached lookup table
    ▫ Search tree</div><div class="r"></div></div>
<div class="c"><div class="t">Packfiles</div><div class="h"></div><div class="p">▪ Lots of small files
▪ Lots of similar files (versions)
▪ Packfiles
    ▫ Objects bundled together
    ▫ Similar objects stored as delta
    ▫ 2 new types: OFS_DELTA and REF_DELTA
▪ Pack Index
    ▫ Detached lookup table
    ▫ Search tree</div><div class="r"></div></div>
<div class="c"><div class="t">Packfiles</div><div class="h"></div><div class="p">▪ Lots of small files
▪ Lots of similar files (versions)
▪ Packfiles
    ▫ Objects bundled together
    ▫ Similar objects stored as delta
    ▫ 2 new types: OFS_DELTA and REF_DELTA
▪ Pack Index
    ▫ Detached lookup table
    ▫ Search tree</div><div class="r"></div></div>
<div class="c"><div class="t">Packfiles</div><div class="h"></div><div class="p">▪ Lots of small files
▪ Lots of similar files (versions)
▪ Packfiles
    ▫ Objects bundled together
    ▫ Similar objects stored as delta
    ▫ 2 new types: OFS_DELTA and REF_DELTA
▪ Pack Index
    ▫ Detached lookup table
    ▫ Search tree</div><div class="r"></div></div>
<div class="c"><div class="t">Packfiles</div><div class="h"></div><div class="p">▪ Lots of small files
▪ Lots of similar files (versions)
▪ Packfiles
    ▫ Objects bundled together
    ▫ Similar objects stored as delta
    ▫ 2 new types: OFS_DELTA and REF_DELTA
▪ Pack Index
    ▫ Detached lookup table
    ▫ Search tree</div><div class="r"></div></div>
</div></body></html>
